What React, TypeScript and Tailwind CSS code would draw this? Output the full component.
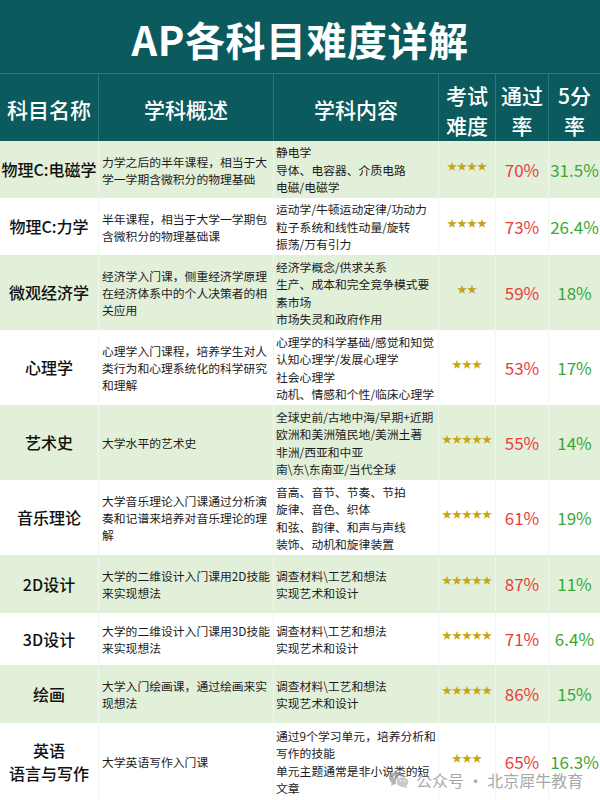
import React from "react";

type Row = {
  name: string[];
  desc: string[];
  content: string[];
  stars: number;
  pass: string;
  five: string;
  h: string;
  green: boolean;
};

const rows: Row[] = [
  {
    name: ["物理C:电磁学"],
    desc: ["力学之后的半年课程，相当于大", "学一学期含微积分的物理基础"],
    content: ["静电学", "导体、电容器、介质电路", "电磁/电磁学"],
    stars: 4,
    pass: "70%",
    five: "31.5%",
    h: "h-[57px]",
    green: true,
  },
  {
    name: ["物理C:力学"],
    desc: ["半年课程，相当于大学一学期包", "含微积分的物理基础课"],
    content: ["运动学/牛顿运动定律/功动力", "粒子系统和线性动量/旋转", "振荡/万有引力"],
    stars: 4,
    pass: "73%",
    five: "26.4%",
    h: "h-[57px]",
    green: false,
  },
  {
    name: ["微观经济学"],
    desc: ["经济学入门课，侧重经济学原理", "在经济体系中的个人决策者的相", "关应用"],
    content: ["经济学概念/供求关系", "生产、成本和完全竞争模式要", "素市场", "市场失灵和政府作用"],
    stars: 2,
    pass: "59%",
    five: "18%",
    h: "h-[75px]",
    green: true,
  },
  {
    name: ["心理学"],
    desc: ["心理学入门课程，培养学生对人", "类行为和心理系统化的科学研究", "和理解"],
    content: ["心理学的科学基础/感觉和知觉", "认知心理学/发展心理学", "社会心理学", "动机、情感和个性/临床心理学"],
    stars: 3,
    pass: "53%",
    five: "17%",
    h: "h-[75px]",
    green: false,
  },
  {
    name: ["艺术史"],
    desc: ["大学水平的艺术史"],
    content: ["全球史前/古地中海/早期+近期", "欧洲和美洲殖民地/美洲土著", "非洲/西亚和中亚", "南\\东\\东南亚/当代全球"],
    stars: 5,
    pass: "55%",
    five: "14%",
    h: "h-[75px]",
    green: true,
  },
  {
    name: ["音乐理论"],
    desc: ["大学音乐理论入门课通过分析演", "奏和记谱来培养对音乐理论的理", "解"],
    content: ["音高、音节、节奏、节拍", "旋律、音色、织体", "和弦、韵律、和声与声线", "装饰、动机和旋律装置"],
    stars: 5,
    pass: "61%",
    five: "19%",
    h: "h-[75px]",
    green: false,
  },
  {
    name: ["2D设计"],
    desc: ["大学的二维设计入门课用2D技能", "来实现想法"],
    content: ["调查材料\\工艺和想法", "实现艺术和设计"],
    stars: 5,
    pass: "87%",
    five: "11%",
    h: "h-[58px]",
    green: true,
  },
  {
    name: ["3D设计"],
    desc: ["大学的二维设计入门课用3D技能", "来实现想法"],
    content: ["调查材料\\工艺和想法", "实现艺术和设计"],
    stars: 5,
    pass: "71%",
    five: "6.4%",
    h: "h-[52px]",
    green: false,
  },
  {
    name: ["绘画"],
    desc: ["大学入门绘画课，通过绘画来实", "现想法"],
    content: ["调查材料\\工艺和想法", "实现艺术和设计"],
    stars: 5,
    pass: "86%",
    five: "15%",
    h: "h-[58px]",
    green: true,
  },
  {
    name: ["英语", "语言与写作"],
    desc: ["大学英语写作入门课"],
    content: ["通过9个学习单元，培养分析和", "写作的技能", "单元主题通常是非小说类的短", "文章"],
    stars: 3,
    pass: "65%",
    five: "16.3%",
    h: "h-[77px]",
    green: false,
  },
];

const grid = "grid grid-cols-[99px_175px_165px_57px_53px_51px]";
const cell = "border-r border-[#f1f6ee] flex items-center";

const WeChat = () => (
  <svg width="22" height="20" viewBox="0 0 22 20" fill="none">
    <ellipse cx="8.5" cy="8" rx="7.5" ry="6.3" fill="#9a9a9a" />
    <path d="M4 12.5 L3 16 L7 13.8 Z" fill="#9a9a9a" />
    <ellipse cx="14.5" cy="12" rx="6.3" ry="5.3" fill="#b8b8b8" stroke="#fff" strokeWidth="1" />
    <path d="M18 15.5 L19.5 18.5 L15.5 16.8 Z" fill="#b8b8b8" />
    <circle cx="6" cy="6.5" r="1" fill="#fff" />
    <circle cx="11" cy="6.5" r="1" fill="#fff" />
    <circle cx="12.5" cy="11" r="0.8" fill="#fff" />
    <circle cx="16.5" cy="11" r="0.8" fill="#fff" />
  </svg>
);

export default function App() {
  return (
    <div className="relative w-[600px] h-[800px] overflow-hidden bg-white font-['Noto_Sans_CJK_SC',sans-serif]">
      <div className="h-[74px] bg-[#0a5a5e] border-b border-[#2d7679] flex items-center justify-center">
        <h1 className="text-white text-[40px] font-bold leading-none tracking-[0.5px] mt-[4px]">
          AP各科目难度详解
        </h1>
      </div>

      <div className={`${grid} h-[67px] bg-[#0a5a5e] text-white text-[21px] font-medium`}>
        <div className="flex items-center justify-center border-r border-[#2d7679] pt-[4px]">科目名称</div>
        <div className="flex items-center justify-center border-r border-[#2d7679] pt-[4px]">学科概述</div>
        <div className="flex items-center justify-center border-r border-[#2d7679] pt-[4px]">学科内容</div>
        <div className="flex items-center justify-center border-r border-[#2d7679] text-center leading-[30px] pt-[4px]">
          考试
          <br />
          难度
        </div>
        <div className="flex items-center justify-center border-r border-[#2d7679] text-center leading-[30px] pt-[4px]">
          通过
          <br />率
        </div>
        <div className="flex items-center justify-center text-center leading-[30px] pt-[4px]">
          5分
          <br />率
        </div>
      </div>

      {rows.map((r, i) => (
        <div key={i} className={`${grid} ${r.h} ${r.green ? "bg-[#e2efd9]" : "bg-white"}`}>
          <div className={`${cell} justify-center text-center text-[16px] font-medium text-[#111] leading-[23px] whitespace-nowrap`}>
            <div>
              {r.name.map((n, j) => (
                <div key={j}>{n}</div>
              ))}
            </div>
          </div>
          <div className={`${cell} pl-[3px] text-[11.8px] leading-[17px] text-[#1c1c1c] whitespace-nowrap`}>
            <div>
              {r.desc.map((d, j) => (
                <div key={j}>{d}</div>
              ))}
            </div>
          </div>
          <div className={`${cell} pl-[2px] text-[11.8px] leading-[17.5px] text-[#1c1c1c] whitespace-nowrap`}>
            <div>
              {r.content.map((c, j) => (
                <div key={j}>{c}</div>
              ))}
            </div>
          </div>
          <div className={`${cell} justify-center`}>
            <span className="mb-[8px] text-[10px] leading-none text-[#c4a514]">{"★".repeat(r.stars)}</span>
          </div>
          <div className={`${cell} justify-center text-[17px] text-[#e8403e]`}>{r.pass}</div>
          <div className="flex items-center justify-center text-[17px] text-[#3aa935]">{r.five}</div>
        </div>
      ))}

      <div className="absolute left-[388px] top-[768px] flex items-center gap-[6px] text-[16px] text-[#8c8c8c] opacity-75 pointer-events-none">
        <WeChat />
        <span>公众号 · 北京犀牛教育</span>
      </div>
    </div>
  );
}
